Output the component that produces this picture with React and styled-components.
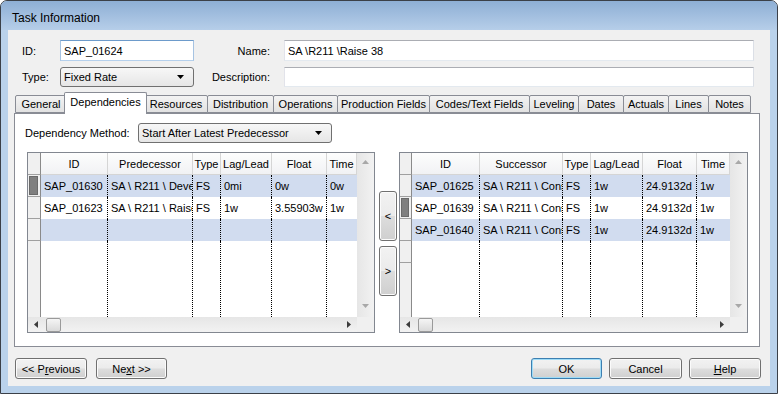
import React from "react";
import styled, { createGlobalStyle } from "styled-components";

const GlobalStyle = createGlobalStyle`
  html, body {
    margin: 0;
    padding: 0;
    background: #fff;
  }
  body {
    font-family: "Liberation Sans", Arial, sans-serif;
    font-size: 11px;
    color: #000;
  }
  * {
    box-sizing: border-box;
  }
`;

const tabs = [
  { label: "General", w: 51 },
  { label: "Dependencies", w: 78, active: true },
  { label: "Resources", w: 63 },
  { label: "Distribution", w: 66 },
  { label: "Operations", w: 64 },
  { label: "Production Fields", w: 92 },
  { label: "Codes/Text Fields", w: 100 },
  { label: "Leveling", w: 49 },
  { label: "Dates", w: 45 },
  { label: "Actuals", w: 45 },
  { label: "Lines", w: 40 },
  { label: "Notes", w: 42 },
];

const predCols = ["ID", "Predecessor", "Type", "Lag/Lead", "Float", "Time"];
const succCols = ["ID", "Successor", "Type", "Lag/Lead", "Float", "Time"];

const predRows = [
  ["SAP_01630", "SA \\ R211 \\ Develop", "FS", "0mi", "0w", "0w"],
  ["SAP_01623", "SA \\ R211 \\ Raise 37", "FS", "1w", "3.55903w", "1w"],
];

const succRows = [
  ["SAP_01625", "SA \\ R211 \\ Construct", "FS", "1w", "24.9132d", "1w"],
  ["SAP_01639", "SA \\ R211 \\ Construct", "FS", "1w", "24.9132d", "1w"],
  ["SAP_01640", "SA \\ R211 \\ Construct", "FS", "1w", "24.9132d", "1w"],
];

// window frame
const Window = styled.div`
  width: 778px;
  height: 394px;
  border: 1px solid #3b4048;
  border-radius: 7px 7px 0 0;
  background: #bad2eb;
  display: flex;
  flex-direction: column;
  overflow: hidden;
`;

const TitleBar = styled.div`
  height: 29px;
  flex-shrink: 0;
  padding: 10px 0 0 11px;
  font-size: 12px;
  line-height: 14px;
  background: linear-gradient(to bottom, #8eafd5, #b6cee9);
`;

const Body = styled.div`
  flex: 1;
  margin: 0 7px 7px;
  background: #f0f0f0;
  display: flex;
  flex-direction: column;
`;

// header fields
const HeaderForm = styled.div`
  display: grid;
  grid-template-columns: 38px 134px 1fr 470px;
  grid-template-rows: 21px 20px;
  row-gap: 6px;
  padding: 10px 16px 0 14px;
  align-items: center;
`;

const FieldLabel = styled.span`
  text-align: ${(p) => (p.$right ? "right" : "left")};
  padding-right: ${(p) => (p.$right ? "14px" : "0")};
  white-space: nowrap;
`;

const TextBox = styled.div`
  height: ${(p) => p.$h || 21}px;
  background: #fff;
  border: 1px solid;
  border-color: ${(p) =>
    p.$focus
      ? "#6d9bcb #a6c3e2 #b5d0ec #a6c3e2"
      : "#abadb3 #dbdfe6 #e3e9ef #e2e3ea"};
  padding: 0 3px;
  display: flex;
  align-items: center;
  white-space: nowrap;
`;

const Select = styled.div`
  width: ${(p) => p.$w}px;
  height: 20px;
  border: 1px solid #707070;
  border-radius: 3px;
  background: linear-gradient(to bottom, #f7f7f7, #e6e6e6);
  padding: 0 9px 0 3px;
  display: flex;
  align-items: center;
  justify-content: space-between;
`;

const DropArrow = () => (
  <svg width="7" height="4" viewBox="0 0 7 4">
    <path d="M0 0H7L3.5 4Z" fill="#000" />
  </svg>
);

// tabs
const TabStrip = styled.div`
  display: flex;
  align-items: flex-end;
  height: 21px;
  margin-top: 5px;
  padding-left: 8px;
`;

const Tab = styled.div`
  position: relative;
  z-index: ${(p) => (p.$active ? 1 : 0)};
  width: ${(p) => (p.$active ? p.$w + 5 : p.$w + 1)}px;
  height: ${(p) => (p.$active ? 22 : 18)}px;
  margin: 0 ${(p) => (p.$active ? -2 : 0)}px ${(p) => (p.$active ? -1 : 0)}px
    ${(p) => (p.$active ? -3 : -1)}px;
  border: 1px solid #898c95;
  border-bottom: ${(p) => (p.$active ? "none" : "1px solid #898c95")};
  border-radius: 2px 2px 0 0;
  background: ${(p) =>
    p.$active ? "#fff" : "linear-gradient(to bottom, #f3f3f3, #e2e2e2)"};
  display: flex;
  justify-content: center;
  padding-top: ${(p) => (p.$active ? 3 : 2)}px;
  white-space: nowrap;
`;

const Panel = styled.div`
  margin: 0 10px 0 6px;
  height: 234px;
  background: #fff;
  border: 1px solid #898c95;
  display: flex;
  flex-direction: column;
  padding: 9px 11px 0 12px;
`;

const MethodRow = styled.div`
  display: flex;
  align-items: center;
  margin-left: -2px;
  height: 20px;
`;

const MethodLabel = styled.span`
  width: 113px;
`;

const GridsRow = styled.div`
  display: flex;
  height: 181px;
  margin-top: 9px;
`;

// data grid
const GridBox = styled.div`
  width: ${(p) => (p.$w ? `${p.$w}px` : "auto")};
  flex: ${(p) => (p.$w ? "none" : 1)};
  border: 1px solid #828790;
  display: grid;
  grid-template-columns: 1fr 17px;
  grid-template-rows: 1fr 15px;
  overflow: hidden;
  background: #fff;
`;

const TableArea = styled.div`
  display: flex;
  flex-direction: column;
  overflow: hidden;
  min-width: 0;
`;

const Row = styled.div`
  display: grid;
  grid-template-columns: ${(p) => p.$cols};
  height: ${(p) => (p.$fill ? "auto" : "22px")};
  flex: ${(p) => (p.$fill ? 1 : "none")};
  background: ${(p) => (p.$alt ? "#d1dcef" : "#fff")};
`;

const HeadCell = styled.div`
  display: flex;
  align-items: center;
  justify-content: center;
  background: linear-gradient(to bottom, #fdfdfd, #f1f2f4);
  border-right: 1px solid #d5d5d5;
  border-bottom: 1px solid #d5d5d5;
  white-space: nowrap;
  overflow: hidden;
`;

const Cell = styled.div`
  display: flex;
  align-items: center;
  padding-left: 3px;
  white-space: nowrap;
  overflow: hidden;
  border-right: ${(p) => (p.$last ? "none" : "1px dotted #000")};
`;

const Selector = styled.div`
  background: #f0f0f0;
  border-right: 1px solid #8a8a8a;
  border-bottom: ${(p) => (p.$open ? "none" : "1px solid #a0a0a0")};
  padding: 1px 2px 1px 1px;
`;

const Marker = styled.div`
  height: 100%;
  background: #7f7f7f;
  border: 1px solid #6a6a6a;
`;

const VScroll = styled.div`
  background: linear-gradient(to right, #e6e6e6, #f2f2f2);
  display: flex;
  flex-direction: column;
  align-items: center;
  justify-content: space-between;
  padding: 6px 0 8px;
`;

const HScroll = styled.div`
  background: linear-gradient(to bottom, #e6e6e6, #f2f2f2);
  display: flex;
  align-items: center;
  padding: 0 6px;
`;

const Thumb = styled.div`
  width: 15px;
  height: 14px;
  margin-left: 8px;
  border: 1px solid #9a9a9a;
  border-radius: 2px;
  background: linear-gradient(to bottom, #f5f5f5, #dadada);
`;

const Gap = styled.div`
  flex: 1;
`;

const Corner = styled.div`
  background: #f0f0f0;
`;

const Arrow = ({ dir, color }) => {
  const d = {
    up: "M0 5L3.5 1L7 5Z",
    down: "M0 2L3.5 6L7 2Z",
    left: "M4 0L0 3.5L4 7Z",
    right: "M0 0L4 3.5L0 7Z",
  }[dir];
  const w = dir === "left" || dir === "right" ? 4 : 7;
  return (
    <svg width={w} height={7} viewBox={`0 0 ${w} 7`}>
      <path d={d} fill={color} />
    </svg>
  );
};

const MoveColumn = styled.div`
  width: 18px;
  margin: 0 2px 0 4px;
  display: flex;
  flex-direction: column;
  justify-content: center;
  gap: 5px;
  padding-top: 2px;
`;

const MoveButton = styled.button`
  height: 50px;
  padding: 0;
  font-family: inherit;
  font-size: 11px;
  color: #000;
  border: 1px solid #707070;
  border-radius: 3px;
  background: linear-gradient(to bottom, #f2f2f2 0%, #ebebeb 49%, #dddddd 51%, #cfcfcf 100%);
  box-shadow: inset 0 0 0 1px #fbfbfb;
`;

// footer
const Footer = styled.div`
  display: flex;
  margin-top: 11px;
  padding: 0 9px 0 7px;
`;

const Button = styled.button`
  width: ${(p) => p.$w}px;
  height: 21px;
  margin-left: ${(p) => p.$gap || 0}px;
  padding: 0;
  font-family: inherit;
  font-size: 11px;
  color: #000;
  border: 1px solid ${(p) => (p.$default ? "#3c7fb1" : "#707070")};
  border-radius: 3px;
  background: linear-gradient(to bottom, #f2f2f2 0%, #ebebeb 49%, #dddddd 51%, #cfcfcf 100%);
  box-shadow: inset 0 0 0 1px ${(p) => (p.$default ? "#9fdcf7" : "#fbfbfb")};
  u {
    text-decoration: underline;
  }
`;

const DataGrid = ({ cols, widths, rows, current, w }) => {
  const all = [...rows, null];
  return (
    <GridBox $w={w}>
      <TableArea>
        <Row $cols={widths}>
          <Selector />
          {cols.map((c) => (
            <HeadCell key={c}>{c}</HeadCell>
          ))}
        </Row>
        {all.map((r, i) => (
          <Row key={i} $cols={widths} $alt={i % 2 === 0}>
            <Selector>{i === current && <Marker />}</Selector>
            {cols.map((c, j) => (
              <Cell key={c} $last={j === cols.length - 1}>
                {r ? r[j] : ""}
              </Cell>
            ))}
          </Row>
        ))}
        <Row $cols={widths} $fill>
          <Selector $open />
          {cols.map((c, j) => (
            <Cell key={c} $last={j === cols.length - 1} />
          ))}
        </Row>
      </TableArea>
      <VScroll>
        <Arrow dir="up" color="#a8a8a8" />
        <Arrow dir="down" color="#a8a8a8" />
      </VScroll>
      <HScroll>
        <Arrow dir="left" color="#3c3c3c" />
        <Thumb />
        <Gap />
        <Arrow dir="right" color="#3c3c3c" />
      </HScroll>
      <Corner />
    </GridBox>
  );
};

export default function App() {
  return (
    <>
      <GlobalStyle />
      <Window>
        <TitleBar>Task Information</TitleBar>
        <Body>
          <HeaderForm>
            <FieldLabel>ID:</FieldLabel>
            <TextBox $focus>SAP_01624</TextBox>
            <FieldLabel $right>Name:</FieldLabel>
            <TextBox>SA \R211 \Raise 38</TextBox>
            <FieldLabel>Type:</FieldLabel>
            <Select $w={134}>
              Fixed Rate
              <DropArrow />
            </Select>
            <FieldLabel $right>Description:</FieldLabel>
            <TextBox $h={20} />
          </HeaderForm>

          <TabStrip>
            {tabs.map((t) => (
              <Tab key={t.label} $w={t.w} $active={t.active}>
                {t.label}
              </Tab>
            ))}
          </TabStrip>

          <Panel>
            <MethodRow>
              <MethodLabel>Dependency Method:</MethodLabel>
              <Select $w={194}>
                Start After Latest Predecessor
                <DropArrow />
              </Select>
            </MethodRow>
            <GridsRow>
              <DataGrid
                w={348}
                cols={predCols}
                widths="13px 67px 85px 28px 51px 55px 1fr"
                rows={predRows}
                current={0}
              />
              <MoveColumn>
                <MoveButton>&lt;</MoveButton>
                <MoveButton>&gt;</MoveButton>
              </MoveColumn>
              <DataGrid
                cols={succCols}
                widths="12px 68px 83px 28px 52px 54px 1fr"
                rows={succRows}
                current={1}
              />
            </GridsRow>
          </Panel>

          <Footer>
            <Button $w={72}>
              &lt;&lt; P<u>r</u>evious
            </Button>
            <Button $w={71} $gap={9}>
              Ne<u>x</u>t &gt;&gt;
            </Button>
            <Gap />
            <Button $w={71} $default>
              OK
            </Button>
            <Button $w={73} $gap={7}>
              Cancel
            </Button>
            <Button $w={72} $gap={7}>
              <u>H</u>elp
            </Button>
          </Footer>
        </Body>
      </Window>
    </>
  );
}
